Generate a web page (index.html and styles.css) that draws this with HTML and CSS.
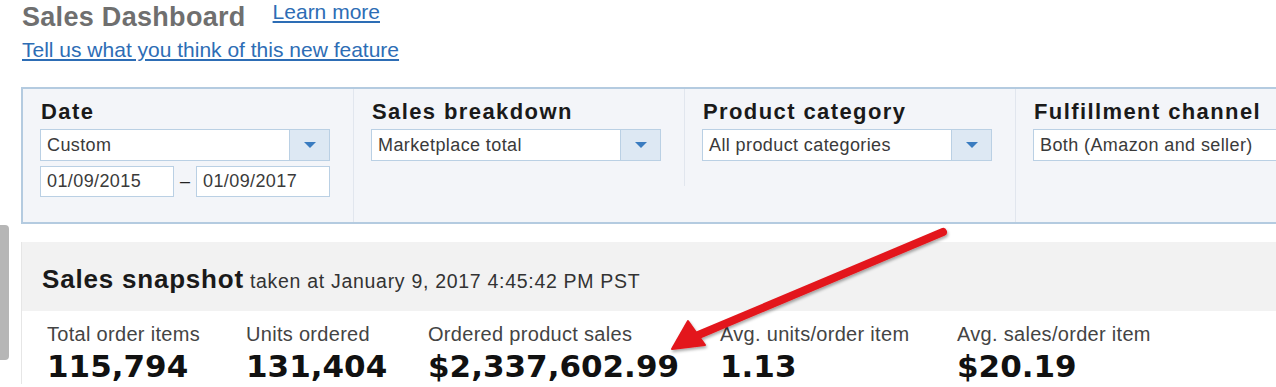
FILE: index.html
```html
<!DOCTYPE html>
<html lang="en">
<head>
    <meta charset="UTF-8">
    <title>Sales Dashboard</title>
    <link rel="stylesheet" href="styles.css">
</head>
<body>
    <div class="page">
        <div class="header">
            <h1>Sales Dashboard</h1>
            <a href="#" class="learn">Learn more</a>
        </div>
        <a href="#" class="feedback">Tell us what you think of this new feature</a>

        <div class="filters">
            <div class="filter">
                <div class="label">Date</div>
                <div class="select">
                    <span class="value">Custom</span>
                    <span class="drop"><i></i></span>
                </div>
                <div class="dates">
                    <div class="input">01/09/2015</div>
                    <span class="dash">&ndash;</span>
                    <div class="input">01/09/2017</div>
                </div>
            </div>
            <div class="filter short">
                <div class="label">Sales breakdown</div>
                <div class="select">
                    <span class="value">Marketplace total</span>
                    <span class="drop"><i></i></span>
                </div>
            </div>
            <div class="filter">
                <div class="label">Product category</div>
                <div class="select">
                    <span class="value">All product categories</span>
                    <span class="drop"><i></i></span>
                </div>
            </div>
            <div class="filter last">
                <div class="label">Fulfillment channel</div>
                <div class="select wide">
                    <span class="value">Both (Amazon and seller)</span>
                </div>
            </div>
        </div>

        <div class="snapshot">
            <div class="snap-head">
                <span class="snap-title">Sales snapshot</span>
                <span class="snap-time">taken at January 9, 2017 4:45:42 PM PST</span>
            </div>
            <div class="metrics">
                <div class="metric m1">
                    <div class="m-label">Total order items</div>
                    <div class="m-value">115,794</div>
                </div>
                <div class="metric m2">
                    <div class="m-label">Units ordered</div>
                    <div class="m-value">131,404</div>
                </div>
                <div class="metric m3">
                    <div class="m-label">Ordered product sales</div>
                    <div class="m-value">$2,337,602.99</div>
                </div>
                <div class="metric m4">
                    <div class="m-label">Avg. units/order item</div>
                    <div class="m-value">1.13</div>
                </div>
                <div class="metric m5">
                    <div class="m-label">Avg. sales/order item</div>
                    <div class="m-value">$20.19</div>
                </div>
            </div>
        </div>
    </div>

    <div class="side-tab"></div>

    <svg class="arrow" width="1276" height="387" viewBox="0 0 1276 387">
        <defs>
            <filter id="shade" x="-10%" y="-10%" width="120%" height="130%">
                <feDropShadow dx="1" dy="2" stdDeviation="1.5" flood-color="#000" flood-opacity="0.35"/>
            </filter>
        </defs>
        <g filter="url(#shade)" fill="#e3161b" stroke="#e3161b">
            <line x1="943" y1="232" x2="696" y2="336" stroke-width="8" stroke-linecap="round"/>
            <polygon points="672,349 688,321 705,345" stroke-width="2" stroke-linejoin="round"/>
        </g>
    </svg>
</body>
</html>
```

FILE: styles.css
```css
body {
    margin: 0;
    font-family: 'Liberation Sans', Arial, sans-serif;
    color: #333;
    background: #fff;
    overflow: hidden;
}

.page {
    width: 1400px;
    padding: 0 0 0 21px;
}

.header {
    display: flex;
    align-items: baseline;
    gap: 27px;
    padding: 0 0 0 1px;
    height: 38px;
}

h1 {
    margin: 0;
    font-size: 27px;
    letter-spacing: 0.3px;
    font-weight: bold;
    color: #6f6f6f;
    line-height: 34px;
}

a {
    color: #2d6db5;
    text-decoration: underline;
}

.learn {
    font-size: 21px;
    position: relative;
    top: -7px;
}

.feedback {
    display: inline-block;
    font-size: 21px;
    line-height: 24px;
    margin-left: 1px;
}

/* filter panel */
.filters {
    display: grid;
    grid-template-columns: 331px 331px 331px 1fr;
    margin-top: 25px;
    height: 133px;
    background: #f3f5f9;
    border: 2px solid #b4cbe0;
    border-right: none;
}

.filter {
    padding: 10px 17px 0 17px;
    border-right: 1px solid #e1e6ee;
}

.filter.short {
    border-right: none;
    position: relative;
}

.filter.short::after {
    content: "";
    position: absolute;
    right: 0;
    top: 0;
    height: 97px;
    border-right: 1px solid #e1e6ee;
}

.filter.last {
    border-right: none;
}

.label {
    font-size: 22px;
    letter-spacing: 1.4px;
    font-weight: bold;
    color: #1a1a1a;
    line-height: 26px;
    margin: 0 0 4px 1px;
}

.select {
    display: flex;
    width: 290px;
    height: 32px;
    border: 1px solid #bad0e4;
    background: #fff;
    box-sizing: border-box;
}

.select.wide {
    width: 300px;
}

.value {
    flex: 1;
    font-size: 18px;
    letter-spacing: 0.4px;
    color: #3a3a3a;
    line-height: 30px;
    padding-left: 6px;
    white-space: nowrap;
}

.drop {
    width: 39px;
    background: #dde8f3;
    border-left: 1px solid #bad0e4;
    display: flex;
    align-items: center;
    justify-content: center;
}

.drop i {
    width: 0;
    height: 0;
    border-left: 6px solid transparent;
    border-right: 6px solid transparent;
    border-top: 6px solid #3a7cc0;
}

.dates {
    display: flex;
    align-items: center;
    margin-top: 5px;
}

.input {
    width: 134px;
    height: 31px;
    box-sizing: border-box;
    border: 1px solid #bad0e4;
    background: #fff;
    font-size: 18px;
    letter-spacing: 0.4px;
    color: #3a3a3a;
    line-height: 29px;
    padding-left: 6px;
}

.dash {
    width: 22px;
    text-align: center;
    font-size: 18px;
    color: #222;
}

/* snapshot */
.snapshot {
    margin-top: 18px;
    border-left: 1px solid #e6e6e6;
}

.snap-head {
    height: 69px;
    background: #f2f2f2;
    display: flex;
    align-items: baseline;
    gap: 6px;
    padding: 22px 0 0 20px;
    box-sizing: border-box;
}

.snap-title {
    font-size: 26px;
    letter-spacing: 0.8px;
    font-weight: bold;
    color: #1a1a1a;
}

.snap-time {
    font-size: 19.5px;
    letter-spacing: 0.7px;
    color: #333;
}

.metrics {
    display: flex;
    padding: 11px 0 0 25px;
}

.metric {
    flex: none;
}

.m1 { width: 199px; }
.m2 { width: 182px; }
.m3 { width: 292px; }
.m4 { width: 237px; }

.m-label {
    font-size: 20px;
    letter-spacing: 0.3px;
    color: #444;
    line-height: 24px;
}

.m-value {
    font-family: 'DejaVu Sans', Verdana, sans-serif;
    font-weight: bold;
    font-size: 31px;
    color: #111;
    line-height: 36px;
    margin-top: 2px;
}

.side-tab {
    position: absolute;
    left: 0;
    top: 225px;
    width: 9px;
    height: 135px;
    background: #b6b6b6;
    border-radius: 0 4px 4px 0;
}

.arrow {
    position: absolute;
    left: 0;
    top: 0;
    pointer-events: none;
}
```
